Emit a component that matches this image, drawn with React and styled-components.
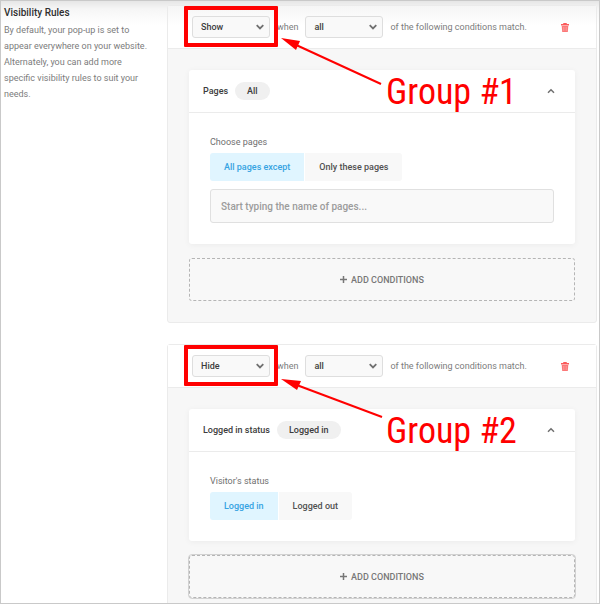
import React, { useId, useState } from "react";
import styled, { createGlobalStyle } from "styled-components";

const GlobalStyle = createGlobalStyle`
  *, *::before, *::after { box-sizing: border-box; }
  body { margin: 0; background: #fff; }
  body, button, input, select { font-family: Roboto, "Liberation Sans", sans-serif; }
  #root { height: 100vh; overflow: hidden; }
`;

const Page = styled.main`
  display: flex;
  height: 100vh;
  overflow: hidden;
  padding: 4px 2px 0 3px;
  border: 1px solid #c9c9c9;
  background: linear-gradient(#e6e6e6, #f6f6f6 8px, #fff 24px);
`;

const Intro = styled.aside`
  flex: 0 0 163px;
  padding-right: 16px;
  font-size: 9px;
  line-height: 16px;
  color: #7c7c7c;
`;

const IntroTitle = styled.h2`
  margin: 0;
  font-size: 10px;
  line-height: 16px;
  font-weight: 500;
  color: #2f2f2f;
`;

const IntroText = styled.p`
  margin: 1px 0 0;
`;

const Groups = styled.div`
  flex: 1;
  min-width: 0;
  display: flex;
  flex-direction: column;
  gap: 21px;
`;

const Group = styled.section`
  position: relative;
  flex: none;
  border: 1px solid #ebebeb;
  border-radius: 3px;
  background: #f7f7f7;
`;

const GroupHeader = styled.header`
  display: flex;
  align-items: center;
  gap: 7px;
  height: 43px;
  padding: 0 27px 0 24px;
  border-bottom: 1px solid #ebebeb;
  background: ${(p) => (p.$tinted ? "linear-gradient(#f5f5f5, #fff 20px)" : "#fff")};
  font-size: 9px;
  color: #7c7c7c;
`;

const SelectBox = styled.span`
  display: grid;
  align-items: center;
  width: 78px;

  > * { grid-area: 1 / 1; }
  > svg { justify-self: end; margin-right: 6px; pointer-events: none; }
`;

const Select = styled.select`
  appearance: none;
  width: 100%;
  height: 22px;
  padding: 0 20px 0 8px;
  border: 1px solid #dedede;
  border-radius: 3px;
  background: #f9f9f9;
  font-size: 9px;
  font-weight: 500;
  color: #3c3c3c;
`;

const IconButton = styled.button`
  display: flex;
  margin-left: auto;
  padding: 0;
  border: 0;
  background: none;
`;

const GroupBody = styled.div`
  display: flex;
  flex-direction: column;
  gap: 14px;
  padding: 21px;
`;

const Card = styled.article`
  border-radius: 3px;
  background: #fff;
  box-shadow: 0 1px 6px rgba(0, 0, 0, 0.05);
`;

const CardHeader = styled.header`
  display: flex;
  align-items: center;
  gap: 7px;
  height: 43px;
  padding: 0 20px 0 14px;
  border-bottom: 1px solid #ebebeb;
`;

const CardTitle = styled.h3`
  margin: 0;
  font-size: 9px;
  font-weight: 500;
  color: #3c3c3c;
`;

const Pill = styled.span`
  padding: 0 12px;
  border-radius: 9px;
  background: #f0f0f0;
  font-size: 9px;
  line-height: 18px;
  font-weight: 500;
  color: #3c3c3c;
`;

const CardBody = styled.div`
  display: flex;
  flex-direction: column;
  padding: 22px 21px 21px;
`;

const FieldSet = styled.fieldset`
  margin: 0;
  padding: 0;
  border: 0;
  min-width: 0;
`;

const Legend = styled.legend`
  padding: 0;
  margin-bottom: 3px;
  font-size: 9px;
  line-height: 15px;
  color: #6f6f6f;
`;

const Segments = styled.div`
  display: flex;
  gap: 1px;
`;

const Segment = styled.button`
  height: 28px;
  padding: 0 14px;
  border: 0;
  background: ${(p) => (p.$active ? "#e0f5ff" : "#f8f8f8")};
  color: ${(p) => (p.$active ? "#36a3e2" : "#505050")};
  font-size: 9px;
  font-weight: 500;

  &:first-child { border-radius: 3px 0 0 3px; }
  &:last-child { border-radius: 0 3px 3px 0; }
`;

const SearchInput = styled.input`
  width: 100%;
  height: 34px;
  margin-top: 8px;
  padding: 0 10px;
  border: 1px solid #e0e0e0;
  border-radius: 3px;
  background: #f9f9f9;
  font-size: 10px;

  &::placeholder { color: #9c9c9c; font-weight: 500; opacity: 1; }
`;

const AddButton = styled.button`
  display: flex;
  align-items: center;
  justify-content: center;
  gap: 4px;
  height: 43px;
  border: 1px dashed #b5b5b5;
  border-radius: 3px;
  outline: ${(p) => (p.$focused ? "1px solid #d2d2d2" : "none")};
  background: #f8f8f8;
  font-size: 9px;
  font-weight: 500;
  color: #777;
`;

const Highlight = styled.div`
  position: absolute;
  top: 0;
  left: 16px;
  width: 94px;
  height: 41px;
  border: 4px solid #f00;
  border-radius: 1px;
  pointer-events: none;
`;

const Callout = styled.div`
  position: absolute;
  top: 26px;
  left: 112px;
  display: flex;
  align-items: flex-end;
  gap: 2px;
  pointer-events: none;
`;

const CalloutArrow = styled.svg`
  width: 104px;
  height: 60px;
  flex: none;
`;

const CalloutText = styled.span`
  height: 54px;
  margin-bottom: -34px;
  font-family: "Roboto Condensed", "Liberation Sans Narrow", "Liberation Sans", sans-serif;
  font-size: 36px;
  line-height: 40px;
  white-space: nowrap;
  color: #f00;
`;

function Chevron({ up }) {
  return (
    <svg width="8" height="6" viewBox="0 0 8 6" fill="none" stroke="#707070" strokeWidth={up ? 1.5 : 1.8} aria-hidden="true">
      <path d={up ? "M1 4.8 4 1.8 7 4.8" : "M.7 1.2 4 4.4 7.3 1.2"} />
    </svg>
  );
}

function Trash() {
  return (
    <svg width="8" height="9" viewBox="0 0 8 9" aria-hidden="true">
      <path d="M2.5 0h3l.5 1h2v1.5H0V1h2z" fill="#fb5a5a" />
      <path d="M.7 3h6.6L6.8 9H1.2z" fill="#fb7878" />
      <path d="M2.8 4v4M5.2 4v4" stroke="#fdacac" strokeWidth=".7" />
    </svg>
  );
}

function Plus() {
  return (
    <svg width="7" height="7" viewBox="0 0 7 7" stroke="#777" strokeWidth="1.5" aria-hidden="true">
      <path d="M3.5 0v7M0 3.5h7" />
    </svg>
  );
}

function Dropdown({ label, initial, options }) {
  const id = useId();
  return (
    <SelectBox>
      <Select id={id} aria-label={label} defaultValue={initial}>
        {options.map((o) => <option key={o}>{o}</option>)}
      </Select>
      <Chevron />
    </SelectBox>
  );
}

function SegmentedField({ label, options }) {
  const [active, setActive] = useState(options[0]);
  return (
    <FieldSet>
      <Legend>{label}</Legend>
      <Segments>
        {options.map((o) => (
          <Segment key={o} type="button" aria-pressed={o === active} $active={o === active} onClick={() => setActive(o)}>
            {o}
          </Segment>
        ))}
      </Segments>
    </FieldSet>
  );
}

function RuleGroup({ action, title, value, field, options, callout, arrow, tinted, focused, children }) {
  return (
    <Group>
      <GroupHeader $tinted={tinted}>
        <Dropdown label="Action" initial={action} options={["Show", "Hide"]} />
        <span>when</span>
        <Dropdown label="Match" initial="all" options={["all", "any"]} />
        <span>of the following conditions match.</span>
        <IconButton type="button" aria-label="Delete group"><Trash /></IconButton>
      </GroupHeader>
      <GroupBody>
        <Card>
          <CardHeader>
            <CardTitle>{title}</CardTitle>
            <Pill>{value}</Pill>
            <IconButton type="button" aria-label="Collapse"><Chevron up /></IconButton>
          </CardHeader>
          <CardBody>
            <SegmentedField label={field} options={options} />
            {children}
          </CardBody>
        </Card>
        <AddButton type="button" $focused={focused}><Plus />ADD CONDITIONS</AddButton>
      </GroupBody>
      <Highlight />
      <Callout>
        <CalloutArrow viewBox="0 0 104 60" aria-hidden="true">
          <path d={arrow.line} stroke="#f00" strokeWidth="2" />
          <path d={arrow.head} fill="#f00" />
        </CalloutArrow>
        <CalloutText>{callout}</CalloutText>
      </Callout>
    </Group>
  );
}

const arrows = {
  first: { line: "M14 12 101 52", head: "M1 6 20 9 16 18z" },
  second: { line: "M14 13 102 46", head: "M1 8 21 10 17 19z" },
};

export default function App() {
  return (
    <>
      <GlobalStyle />
      <Page>
        <Intro>
          <IntroTitle>Visibility Rules</IntroTitle>
          <IntroText>
            By default, your pop-up is set to appear everywhere on your website. Alternately, you can add
            more specific visibility rules to suit your needs.
          </IntroText>
        </Intro>
        <Groups>
          <RuleGroup
            action="Show" title="Pages" value="All" field="Choose pages"
            options={["All pages except", "Only these pages"]}
            callout="Group #1" arrow={arrows.first} tinted
          >
            <SearchInput type="text" aria-label="Pages" placeholder="Start typing the name of pages..." />
          </RuleGroup>
          <RuleGroup
            action="Hide" title="Logged in status" value="Logged in" field="Visitor's status"
            options={["Logged in", "Logged out"]}
            callout="Group #2" arrow={arrows.second} focused
          />
        </Groups>
      </Page>
    </>
  );
}
